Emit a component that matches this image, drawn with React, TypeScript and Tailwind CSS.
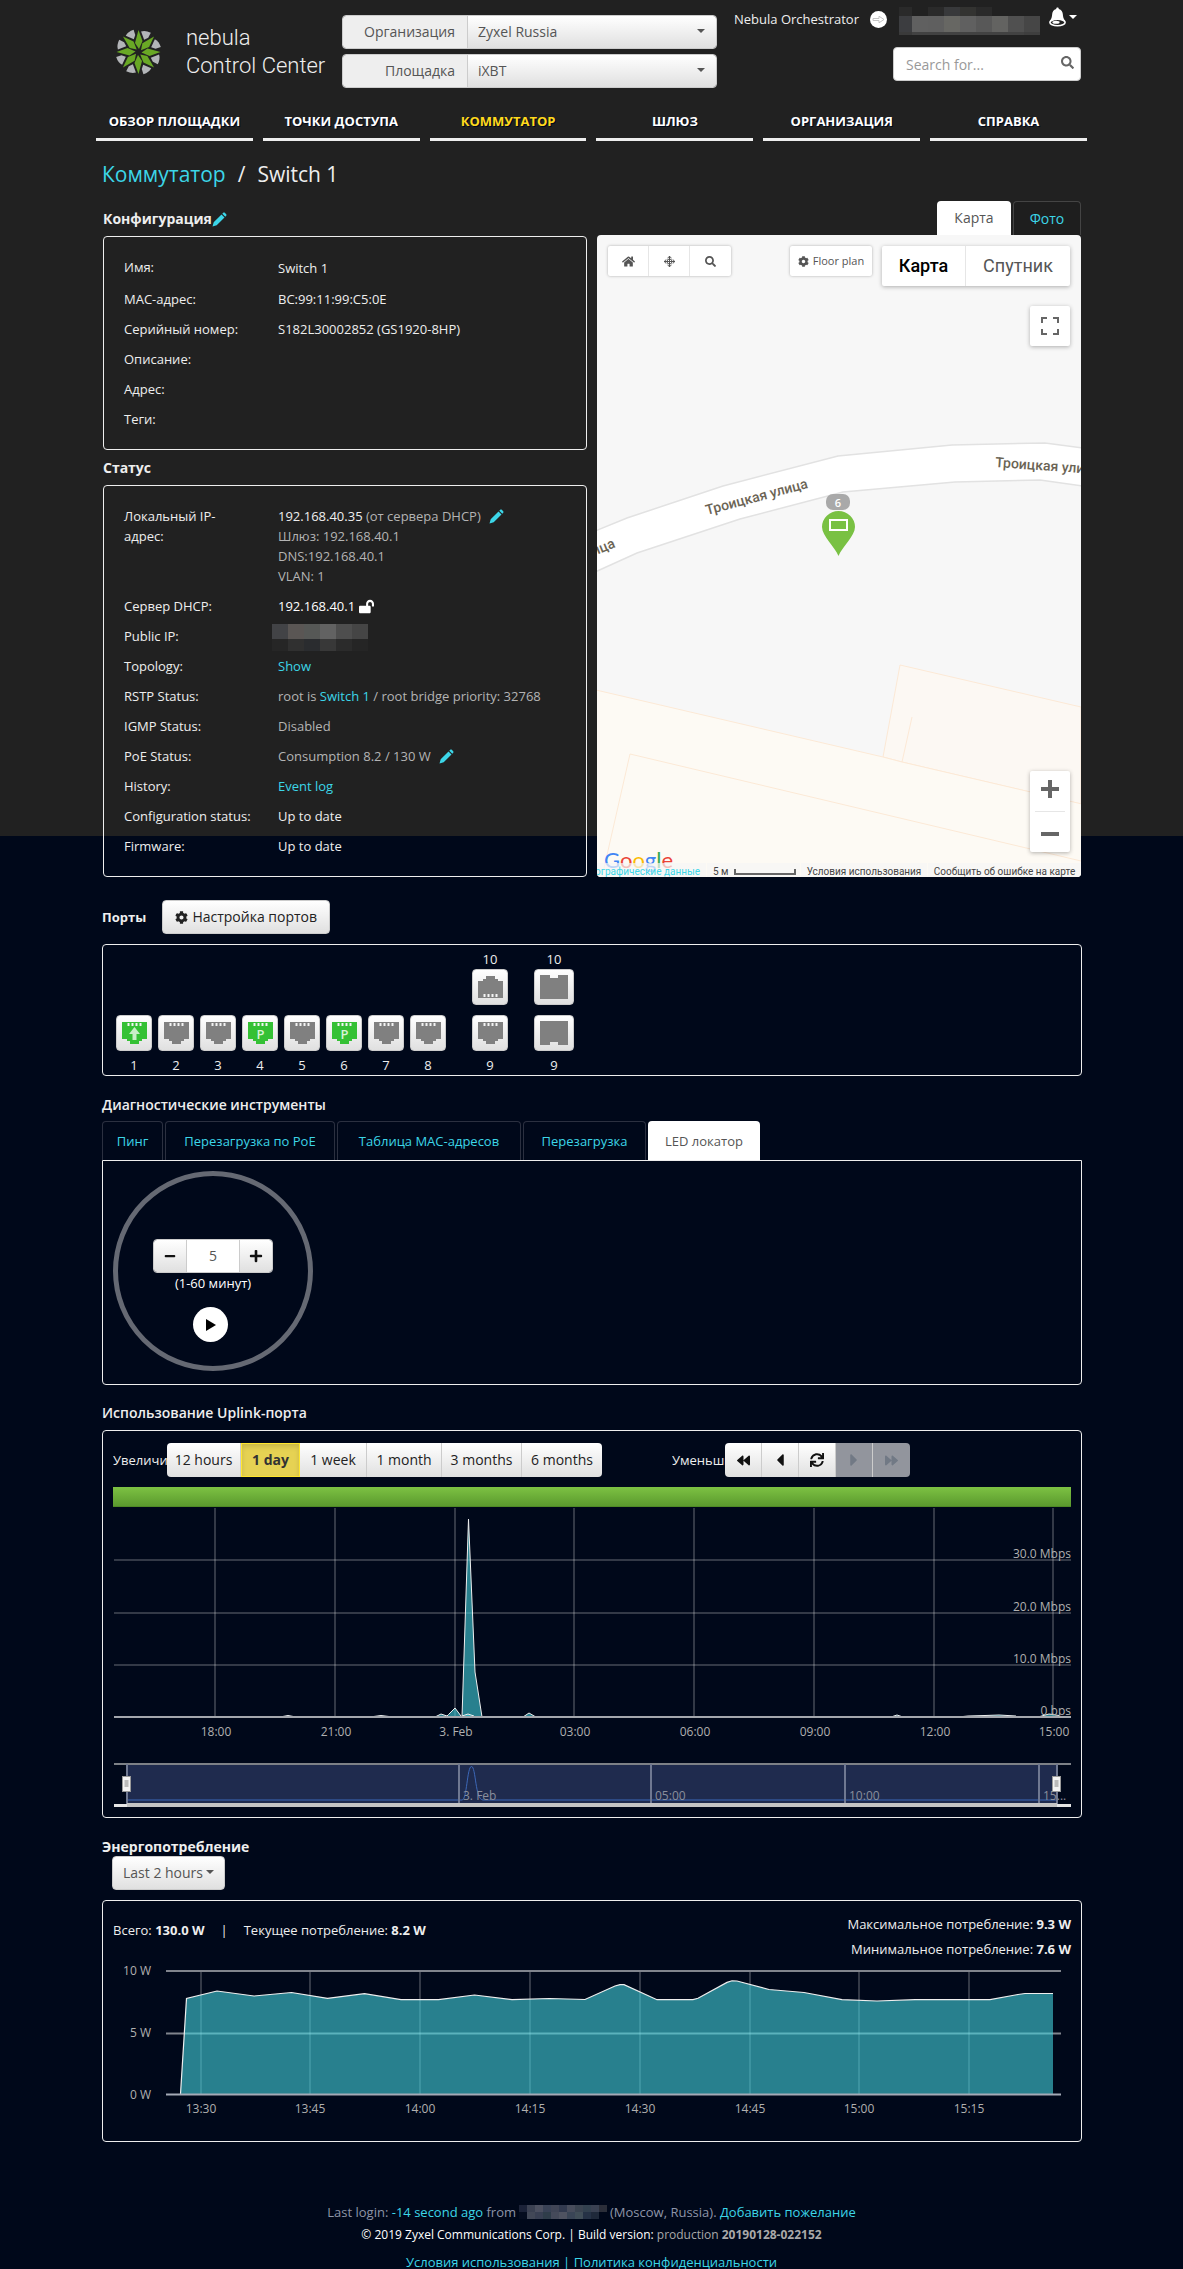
import type { ReactNode } from 'react'
import { FaBackward, FaCaretLeft, FaCaretRight, FaCog, FaForward, FaHome, FaLockOpen, FaMinus, FaPlus, FaSearch, FaSync } from 'react-icons/fa'

const NAV = ['ОБЗОР ПЛОЩАДКИ', 'ТОЧКИ ДОСТУПА', 'КОММУТАТОР', 'ШЛЮЗ', 'ОРГАНИЗАЦИЯ', 'СПРАВКА']

const CONFIG = [
  { label: 'MAC-адрес:', value: 'BC:99:11:99:C5:0E' },
  { label: 'Серийный номер:', value: 'S182L30002852 (GS1920-8HP)' },
  { label: 'Описание:', value: '' },
  { label: 'Адрес:', value: '' },
  { label: 'Теги:', value: '' },
]

const PORTS: { id: number; state: 'uplink' | 'poe' | 'down' }[] = [
  { id: 1, state: 'uplink' },
  { id: 2, state: 'down' },
  { id: 3, state: 'down' },
  { id: 4, state: 'poe' },
  { id: 5, state: 'down' },
  { id: 6, state: 'poe' },
  { id: 7, state: 'down' },
  { id: 8, state: 'down' },
]

const TOOLS = [
  { name: 'Пинг', width: 'w-[61px]' },
  { name: 'Перезагрузка по PoE', width: 'w-[170px]' },
  { name: 'Таблица MAC-адресов', width: 'w-[184px]' },
  { name: 'Перезагрузка', width: 'w-[123px]' },
]

const RANGES = [
  { name: '12 hours', width: 'w-[74px]' },
  { name: '1 day', width: 'w-[59px]' },
  { name: '1 week', width: 'w-[67px]' },
  { name: '1 month', width: 'w-[75px]' },
  { name: '3 months', width: 'w-[80px]' },
  { name: '6 months', width: 'w-[80px]' },
]

const UPLINK_HOURS = ['18:00', '21:00', '3. Feb', '03:00', '06:00', '09:00', '12:00', '15:00']
const UPLINK_X = [102, 222, 342, 461, 581, 701, 821, 940]
const POWER_HOURS = ['13:30', '13:45', '14:00', '14:15', '14:30', '14:45', '15:00', '15:15']
const POWER_X = [88, 197, 307, 417, 527, 637, 746, 856]

const POWER_LINE =
  '67.5,144 73.5,48.5 104,41 141,46 178.5,42.5 214.5,48.3 251.5,43.7 288,49.7 325.5,49.7 361.5,45 399,49.7 436.5,48.5 472,49.5 502,36 507,34.6 511,34.6 544,49.7 580,49.7 585,48.3 614,32.4 619,30.8 624,31 656,39.5 691,42.5 729,49.7 764,51 802,49.7 845,49.7 877,49.7 905,44.5 912,43.5 940,43.5'

export default function App() {
  return (
    <div className="bg-[linear-gradient(#212121_836px,#00081a_836px)] font-['Open_Sans',sans-serif] text-[13px] leading-5 text-[#eeeeee]">
      <div className="mx-auto w-full max-w-[991px]">
        <Header />
        <nav className="mt-[18px] grid grid-cols-6 gap-[10px]">
          {NAV.map((item) => (
            <a
              key={item}
              href="#"
              className={
                item === 'КОММУТАТОР'
                  ? 'flex h-[35px] justify-center border-b-3 border-[#eeeeee] pt-[5px] font-bold text-[#ffd91c] [text-shadow:1px_1px_0_#00081a]'
                  : 'flex h-[35px] justify-center border-b-3 border-[#eeeeee] pt-[5px] font-bold text-white [text-shadow:1px_1px_0_#00081a]'
              }
            >
              {item}
            </a>
          ))}
        </nav>

        <main className="pr-[5px] pl-[6px]">
          <h1 className="mt-[18px] flex h-[30px] items-center gap-3 text-[21px]">
            <a href="#" className="text-[#3cd6e8]">Коммутатор</a>
            <span>/</span>
            <span>Switch 1</span>
          </h1>

          <div className="mt-3 grid grid-cols-2 gap-[10px] px-px">
            <div className="flex flex-col pt-2">
              <Config />
              <Status />
            </div>
            <MapPanel />
          </div>

          <Ports />
          <Diagnostics />
          <Uplink />
          <Power />
        </main>

        <Footer />
      </div>
    </div>
  )
}

function Header() {
  return (
    <header className="flex items-start">
      <div className="flex w-[246px] items-center gap-[25px] pt-[24px] pl-5">
        <Logo />
        <p className="font-['Roboto',sans-serif] text-[22px] leading-7 font-light">
          nebula
          <br />
          Control Center
        </p>
      </div>

      <div className="flex w-[375px] flex-col gap-[5px] pt-[15px]">
        <SelectGroup id="org" label="Организация" value="Zyxel Russia" />
        <SelectGroup id="site" label="Площадка" value="iXBT" />
      </div>

      <div className="flex flex-1 flex-col items-end pt-[7px] pr-[6px]">
        <div className="flex h-7 items-center pr-1">
          <span className="mr-[11px] mb-1">Nebula Orchestrator</span>
          <button type="button" aria-label="Switch view" className="mr-3 mb-1 flex size-[17px] items-center justify-center rounded-full bg-white">
            <svg width="13" height="9" viewBox="0 0 13 9" fill="none" stroke="#c4c4c4" strokeWidth="1">
              <path d="M1 3.5h6V1.2L12 4.5 7 7.8V5.5H1z" />
            </svg>
          </button>
          <div className="grid h-7 w-[142px] grid-cols-[13px_16px_16px_16px_16px_16px_16px_16px_16px] grid-rows-[9px_16px_3px]">
            {[
              'bg-[#2a2a2a]', 'bg-[#212121]', 'bg-[#2a2a2a]', 'bg-[#38393b]', 'bg-[#333331]', 'bg-[#2a2a2a]', 'bg-[#212121]', 'bg-[#212121]', 'bg-[#212121]',
              'bg-[#3c3d40]', 'bg-[#606060]', 'bg-[#5f5f5f]', 'bg-[#676763]', 'bg-[#606060]', 'bg-[#585858]', 'bg-[#636361]', 'bg-[#505050]', 'bg-[#464646]',
              'bg-[#3a3a3a]', 'bg-[#424242]', 'bg-[#424242]', 'bg-[#424242]', 'bg-[#424242]', 'bg-[#424242]', 'bg-[#424242]', 'bg-[#424242]', 'bg-[#3e3e3e]',
            ].map((c, i) => (
              <span key={i} className={c} />
            ))}
          </div>
          <button type="button" aria-label="Notifications" className="ml-[7px] flex items-center gap-[2px] pb-2">
            <svg width="19" height="20" viewBox="0 0 19 20">
              <path d="M9.500 0.500c1 0 1.300.7 1.300 1.400 2.800.8 3.800 2.700 4 5.100.2 3 .7 5 2.600 7.200C18 15 14 17 9.500 17S1 15 1.600 14.200C3.500 12 4 10 4.200 7c.2-2.400 1.200-4.300 4-5.100 0-.7.3-1.400 1.300-1.400z" fill="#fff" />
              <ellipse cx="9.5" cy="15.5" rx="7.6" ry="3.2" fill="#212121" stroke="#fff" strokeWidth="1.6" />
              <ellipse cx="8" cy="15.3" rx="3.6" ry="1.5" fill="#fff" />
            </svg>
            <Caret className="text-white" />
          </button>
        </div>
        <div className="relative mt-3 w-[188px]">
          <input
            type="search"
            aria-label="Search"
            placeholder="Search for..."
            className="h-[34px] w-full rounded border border-[#cccccc] bg-white pr-8 pl-3 text-sm text-[#555555] placeholder:text-[#999999]"
          />
          <FaSearch className="absolute top-[9px] right-[7px] size-[13px] text-[#666666]" />
        </div>
      </div>
    </header>
  )
}

function SelectGroup({ id, label, value }: { id: string; label: string; value: string }) {
  return (
    <div className="flex h-[34px] overflow-hidden rounded border border-[#cccccc] text-sm text-[#555555]">
      <label htmlFor={id} className="flex w-[125px] items-center justify-end border-r border-[#cccccc] bg-[#eeeeee] pr-3">
        {label}
      </label>
      <div className="relative flex-1">
        <select id={id} className="h-full w-full appearance-none bg-linear-to-b from-white to-[#e0e0e0] pl-[10px]">
          <option>{value}</option>
        </select>
        <Caret className="pointer-events-none absolute top-[13px] right-[11px] text-[#555555]" />
      </div>
    </div>
  )
}

function Config() {
  return (
    <>
      <h2 className="mb-[7px] flex items-center text-sm leading-5 font-bold">
        Конфигурация
        <EditLink />
      </h2>
      <dl className="flex flex-col gap-[10px] rounded border border-[#eeeeee] px-5 py-5">
        <div className="flex h-[22px]">
          <dt className="w-[154px]">Имя:</dt>
          <dd className="pt-px">Switch 1</dd>
        </div>
        {CONFIG.map((row) => (
          <div key={row.label} className="flex">
            <dt className="w-[154px]">{row.label}</dt>
            <dd>{row.value}</dd>
          </div>
        ))}
      </dl>
    </>
  )
}

function Status() {
  return (
    <>
      <h2 className="mt-2 mb-[7px] text-sm leading-5 font-bold">Статус</h2>
      <dl className="flex flex-col gap-[10px] rounded border border-[#eeeeee] px-5 py-5">
        <Row label={<>Локальный IP-<br />адрес:</>}>
          <span className="flex items-center">
            <span className="text-[#eeeeee]">192.168.40.35</span>&nbsp;(от сервера DHCP)
            <span className="ml-2"><EditLink /></span>
          </span>
          Шлюз: 192.168.40.1
          <br />
          DNS:192.168.40.1
          <br />
          VLAN: 1
        </Row>
        <Row label="Сервер DHCP:">
          <span className="flex items-center gap-1 text-white">
            192.168.40.1 <FaLockOpen className="size-[15px]" />
          </span>
        </Row>
        <Row label="Public IP:">
          <div className="-mt-[2px] -mb-[5px] -ml-[6px] grid grid-cols-[repeat(6,16px)] grid-rows-[15px_12px]">
            {[
              'bg-[#424346]', 'bg-[#5a5654]', 'bg-[#565856]', 'bg-[#626262]', 'bg-[#4e4e4e]', 'bg-[#454545]',
              'bg-[#262626]', 'bg-[#303030]', 'bg-[#2a2c2f]', 'bg-[#383838]', 'bg-[#2b2b2b]', 'bg-[#252525]',
            ].map((c, i) => (
              <span key={i} className={c} />
            ))}
          </div>
        </Row>
        <Row label="Topology:">
          <a href="#" className="text-[#3cd6e8]">Show</a>
        </Row>
        <Row label="RSTP Status:">
          root is <a href="#" className="text-[#3cd6e8]">Switch 1</a> / root bridge priority: 32768
        </Row>
        <Row label="IGMP Status:">Disabled</Row>
        <Row label="PoE Status:">
          <span className="flex items-center gap-2">
            Consumption 8.2 / 130 W <EditLink />
          </span>
        </Row>
        <Row label="History:">
          <a href="#" className="text-[#3cd6e8]">Event log</a>
        </Row>
        <Row label="Configuration status:">
          <span className="text-[#eeeeee]">Up to date</span>
        </Row>
        <Row label="Firmware:">
          <span className="text-[#eeeeee]">Up to date</span>
        </Row>
      </dl>
    </>
  )
}

function Row({ label, children }: { label: ReactNode; children: ReactNode }) {
  return (
    <div className="flex">
      <dt className="w-[154px]">{label}</dt>
      <dd className="text-[#b4b4b4]">{children}</dd>
    </div>
  )
}

function EditLink() {
  return (
    <a href="#" aria-label="Edit">
      <svg width="15" height="15" viewBox="0 0 15 15" fill="#3cd6e8">
        <path d="M0.500 14.500l1.200-4.200L9.500 2.500l3 3-7.800 7.800zM10.300 1.700l.9-.9c.5-.5 1.100-.5 1.600 0l1.400 1.400c.5.5.5 1.100 0 1.600l-.9.900z" />
      </svg>
    </a>
  )
}

function MapPanel() {
  return (
    <div className="flex flex-col">
      <div className="flex h-[34px] justify-end gap-[2px]">
        <button type="button" className="w-[74px] rounded-t bg-white text-sm text-[#555555]">Карта</button>
        <button type="button" className="w-[68px] rounded-t border border-b-0 border-[#444444] bg-[#1e1e1e] text-sm text-[#3cd6e8]">Фото</button>
      </div>
      <div className="relative flex-1 overflow-hidden rounded bg-[#f7f7f7] text-[#555555]">
        <svg className="absolute inset-0 h-full w-full" viewBox="0 0 484 642" preserveAspectRatio="xMidYMid slice">
          <g stroke="#fce9d6" strokeWidth="1">
            <path d="M303 430L484 472V569L305 527L286 522z" fill="#fcf8f3" />
            <path d="M-1 455L286 522L305 527L485 569V643H-1z" fill="#fdfaf4" />
            <path d="M315 482L305 527M33 519L484 626M33 519L5 642" fill="none" />
          </g>
          <path
            d="M-2 296L30 283L126 251L241 221L355 210L448 208L486 213V251L443 245L358 247L246 257L143 284L40 318L-2 337z"
            fill="#fff"
            stroke="#e2e2e2"
            strokeWidth="1.5"
          />
          <g fontFamily="Roboto, sans-serif" fontSize="14" fontWeight="500" fill="#6b6455">
            <text transform="translate(110 280) rotate(-15)">Троицкая улица</text>
            <text transform="translate(398 232) rotate(4)">Троицкая улица</text>
            <text transform="translate(19 312) rotate(-22)" textAnchor="end">Троицкая улица</text>
          </g>
          <rect x="229" y="259" width="24" height="16" rx="7" fill="#a9a9a9" />
          <text x="241" y="272" textAnchor="middle" fontSize="11" fontWeight="600" fill="#fff">6</text>
          <path d="M241.500 321C238 312 225 301 225 292a16.500 16 0 0 1 33 0C258 301 245 312 241.500 321z" fill="#79c143" />
          <rect x="233" y="285" width="17" height="10" fill="none" stroke="#fff" strokeWidth="2" />
          <text x="7" y="633" fontFamily="Lato, sans-serif" fontSize="22">
            <tspan fill="#4285f4">G</tspan>
            <tspan fill="#ea4335">o</tspan>
            <tspan fill="#fbbc05">o</tspan>
            <tspan fill="#4285f4">g</tspan>
            <tspan fill="#34a853">l</tspan>
            <tspan fill="#ea4335">e</tspan>
          </text>
        </svg>

        <div className="absolute top-[11px] left-[11px] flex h-[30px] divide-x divide-[#e6e6e6] rounded-xs bg-white shadow-[0_0_3px_rgba(0,0,0,0.3)]">
          <MapTool label="Home"><FaHome className="size-[13px]" /></MapTool>
          <MapTool label="Center">
            <svg width="11" height="11" viewBox="0 0 11 11" fill="none" stroke="#555" strokeWidth="1">
              <circle cx="5.5" cy="5.5" r="2.5" />
              <path d="M5.500 0v11M0 5.500h11M3.500 2l2-1.500 2 1.500M3.500 9l2 1.500 2-1.500M2 3.500L.5 5.500 2 7.500M9 3.500l1.500 2L9 7.500" />
            </svg>
          </MapTool>
          <MapTool label="Search"><FaSearch className="size-[11px]" /></MapTool>
        </div>

        <div className="absolute top-[11px] right-[11px] flex items-start gap-[10px]">
          <button type="button" className="flex h-[30px] w-[82px] items-center justify-center gap-1 rounded-xs bg-white text-[11px] shadow-[0_0_3px_rgba(0,0,0,0.3)]">
            <FaCog className="size-[11px]" /> Floor plan
          </button>
          <div className="flex h-10 divide-x divide-[#e6e6e6] rounded-xs bg-white font-['Roboto',sans-serif] text-[18px] shadow-[0_1px_4px_rgba(0,0,0,0.3)]">
            <button type="button" className="w-[84px] font-medium text-black">Карта</button>
            <button type="button" className="w-[104px] text-[#565656]">Спутник</button>
          </div>
        </div>

        <button type="button" aria-label="Fullscreen" className="absolute top-[71px] right-[11px] flex size-10 items-center justify-center rounded-xs bg-white shadow-[0_1px_4px_rgba(0,0,0,0.3)]">
          <svg width="18" height="18" viewBox="0 0 18 18" fill="none" stroke="#666" strokeWidth="2">
            <path d="M1 6V1h5M12 1h5v5M17 12v5h-5M6 17H1v-5" />
          </svg>
        </button>

        <div className="absolute right-[11px] bottom-[25px] flex w-10 flex-col rounded-xs bg-white px-[5px] text-[#666666] shadow-[0_1px_4px_rgba(0,0,0,0.3)]">
          <button type="button" aria-label="Zoom in" className="flex h-[41px] items-center justify-center border-b border-[#e6e6e6] pb-1">
            <svg width="18" height="18" viewBox="0 0 18 18" fill="currentColor"><path d="M7 0h4v7h7v4h-7v7H7v-7H0V7h7z" /></svg>
          </button>
          <button type="button" aria-label="Zoom out" className="flex h-[40px] items-center justify-center pt-1">
            <svg width="18" height="4" viewBox="0 0 18 4" fill="currentColor"><path d="M0 0h18v4H0z" /></svg>
          </button>
        </div>

        <div className="absolute inset-x-0 bottom-0 flex h-[14px] justify-end gap-px font-['Roboto',sans-serif] text-[10px] leading-[18px] whitespace-nowrap text-[#444444]">
          <span className="flex w-[109px] justify-end overflow-hidden bg-[#f5f5f5]/70 pr-[6px]">
            <a href="#" className="text-[#3cd6e8]">Картографические данные</a>
          </span>
          <span className="flex w-[93px] gap-[5px] bg-[#f5f5f5]/70 pl-[6px]">
            5 м
            <span className="mt-[6px] h-[6px] w-[62px] border-2 border-t-0 border-[#666666]" />
          </span>
          <a href="#" className="w-[126px] bg-[#f5f5f5]/70 text-center">Условия использования</a>
          <a href="#" className="w-[153px] bg-[#f5f5f5]/70 text-center">Сообщить об ошибке на карте</a>
        </div>
      </div>
    </div>
  )
}

function MapTool({ label, children }: { label: string; children: ReactNode }) {
  return (
    <button type="button" aria-label={label} className="flex w-[41px] items-center justify-center">
      {children}
    </button>
  )
}

function Ports() {
  return (
    <section>
      <div className="mt-[23px] flex items-center gap-4">
        <h2 className="text-[13px] font-bold">Порты</h2>
        <button type="button" className="flex h-[34px] w-[168px] items-center justify-center gap-1 rounded border border-[#cccccc] bg-linear-to-b from-white to-[#e0e0e0] text-sm text-[#222222]">
          <FaCog className="size-[13px]" /> Настройка портов
        </button>
      </div>
      <div className="mt-[10px] flex items-end rounded border border-[#eeeeee] pt-1 pl-[13px] text-center">
        <div className="flex gap-[6px]">
          {PORTS.map((port) => (
            <div key={port.id} className="flex flex-col gap-1">
              <PortButton label={`Port ${port.id}`}>
                <Rj45 state={port.state} />
              </PortButton>
              <span>{port.id}</span>
            </div>
          ))}
        </div>
        <div className="ml-[26px] flex flex-col">
          <span>10</span>
          <PortButton label="Port 10">
            <Rj45 state="down" flipped />
          </PortButton>
          <div className="mt-[10px] mb-1 flex">
            <PortButton label="Port 9">
              <Rj45 state="down" />
            </PortButton>
          </div>
          <span>9</span>
        </div>
        <div className="ml-[26px] flex flex-col">
          <span>10</span>
          <PortButton label="SFP 10" wide>
            <svg width="28" height="24" viewBox="0 0 28 24" fill="#808080"><path d="M0 0h10v3h8V0h10v24H0z" /></svg>
          </PortButton>
          <div className="mt-[10px] mb-1 flex">
            <PortButton label="SFP 9" wide>
              <svg width="28" height="24" viewBox="0 0 28 24" fill="#808080"><path d="M0 0h28v24H18v-3h-8v3H0z" /></svg>
            </PortButton>
          </div>
          <span>9</span>
        </div>
      </div>
    </section>
  )
}

function PortButton({ label, wide, children }: { label: string; wide?: boolean; children: ReactNode }) {
  return (
    <button
      type="button"
      aria-label={label}
      className={
        wide
          ? 'flex h-9 w-10 items-center justify-center rounded border border-[#cccccc] bg-linear-to-b from-white to-[#e0e0e0]'
          : 'flex h-9 w-9 items-center justify-center rounded border border-[#cccccc] bg-linear-to-b from-white to-[#e0e0e0]'
      }
    >
      {children}
    </button>
  )
}

function Rj45({ state, flipped }: { state: 'uplink' | 'poe' | 'down'; flipped?: boolean }) {
  return (
    <svg width="25" height="22" viewBox="0 0 25 22">
      <g transform={flipped ? 'rotate(180 12.5 11)' : undefined}>
        <path d="M0 0h25v17h-5v2h-3v3H8v-3H5v-2H0z" fill={state === 'down' ? '#808080' : '#35c135'} />
        <path d="M5.500 1h2v3h-2zM9.500 1h2v3h-2zM13.500 1h2v3h-2zM17.500 1h2v3h-2z" fill="#f4f4f4" />
      </g>
      {state === 'uplink' && <path d="M12.500 5l5.500 7h-3.500v6h-4v-6H7z" fill="#c8eec8" />}
      {state === 'poe' && <text x="12.5" y="17" textAnchor="middle" fontSize="13" fontWeight="600" fill="#d8f3d8">P</text>}
    </svg>
  )
}

function Diagnostics() {
  return (
    <section>
      <h2 className="mt-[19px] text-sm leading-5 font-semibold">Диагностические инструменты</h2>
      <div className="mt-[6px] flex h-[39px] gap-[2px]">
        {TOOLS.map((tool) => (
          <button key={tool.name} type="button" className={`${tool.width} rounded-t border border-b-0 border-[#2b3040] text-[13px] whitespace-nowrap text-[#3cd6e8]`}>
            {tool.name}
          </button>
        ))}
        <button type="button" className="w-[112px] rounded-t bg-white text-[13px] text-[#555555]">LED локатор</button>
      </div>
      <div className="rounded-b border border-[#eeeeee] p-[10px] pb-[13px]">
        <div className="flex size-[200px] flex-col items-center rounded-full border-[5px] border-[#656973] pt-[63px]">
          <div className="flex h-[34px] w-[120px] overflow-hidden rounded border border-[#cccccc] text-[#111111]">
            <button type="button" aria-label="Minus" className="flex flex-1 items-center justify-center bg-linear-to-b from-white to-[#e0e0e0]">
              <FaMinus className="size-[12px]" />
            </button>
            <input
              type="text"
              aria-label="Минуты"
              defaultValue="5"
              className="w-[54px] border-x border-[#cccccc] bg-white text-center text-sm text-[#555555]"
            />
            <button type="button" aria-label="Plus" className="flex flex-1 items-center justify-center bg-linear-to-b from-white to-[#e0e0e0]">
              <FaPlus className="size-[14px]" />
            </button>
          </div>
          <span className="text-white">(1-60 минут)</span>
          <button type="button" aria-label="Start" className="mt-[14px] mr-[5px] flex size-[35px] items-center justify-center rounded-full bg-white text-black">
            <svg width="10" height="12" viewBox="0 0 10 12" fill="currentColor"><path d="M0 0l10 6-10 6z" /></svg>
          </button>
        </div>
      </div>
    </section>
  )
}

function Uplink() {
  return (
    <section>
      <h2 className="mt-[18px] text-sm leading-5 font-semibold">Использование Uplink-порта</h2>
      <div className="mt-[7px] rounded border border-[#eeeeee] px-[10px] pt-3 pb-[10px]">
        <div className="flex items-center">
          <span className="w-[54px] overflow-hidden">Увеличить</span>
          <div className="flex h-[34px] divide-x divide-[#cccccc] overflow-hidden rounded text-sm text-[#222222]">
            {RANGES.map((range) => (
              <button
                key={range.name}
                type="button"
                className={
                  range.name === '1 day'
                    ? `${range.width} border border-[#ffe62e] bg-[#e6d253] font-bold text-[#333333] shadow-[inset_0_3px_5px_rgba(0,0,0,0.125)]`
                    : `${range.width} bg-linear-to-b from-white to-[#e0e0e0]`
                }
              >
                {range.name}
              </button>
            ))}
          </div>
          <span className="ml-[70px] w-[53px] overflow-hidden">Уменьшить</span>
          <div className="flex h-[34px] divide-x divide-[#cccccc] overflow-hidden rounded text-[#111111]">
            <Step label="First"><FaBackward className="size-[13px]" /></Step>
            <Step label="Previous"><FaCaretLeft className="size-[20px]" /></Step>
            <Step label="Refresh"><FaSync className="size-[14px]" /></Step>
            <Step label="Next" disabled><FaCaretRight className="size-[20px]" /></Step>
            <Step label="Last" disabled><FaForward className="size-[13px]" /></Step>
          </div>
        </div>
        <div className="mt-[10px] h-5 border-b border-[#4f8a26] bg-linear-to-b from-[#7dc243] to-[#5b9a2e]" />
        <UplinkChart />
      </div>
    </section>
  )
}

function Step({ label, disabled, children }: { label: string; disabled?: boolean; children: ReactNode }) {
  return (
    <button
      type="button"
      aria-label={label}
      disabled={disabled}
      className={
        disabled
          ? 'flex w-[37px] items-center justify-center bg-[#92959d] text-[#717985]'
          : 'flex w-[37px] items-center justify-center bg-linear-to-b from-white to-[#e0e0e0]'
      }
    >
      {children}
    </button>
  )
}

function UplinkChart() {
  return (
    <svg className="w-full" viewBox="0 0 958 300" fontSize="12" fill="#b0b0b0">
      {/* grid */}
      <g stroke="#fff" strokeOpacity="0.2" strokeWidth="2">
        {UPLINK_X.map((x) => (
          <path key={x} d={`M${x} 1V210`} />
        ))}
        <path d="M1 53H958M1 106H958M1 158H958" />
      </g>
      {/* traffic */}
      <g fill="#43d0dc" fillOpacity="0.6" stroke="#eeeeee" strokeWidth="1">
        <path d="M349 210L355.500 12L362 165L369 210z" />
        <path d="M322 210L328 207L334 209L335.500 207.500L342 201L348 209M349 209L355 207L361 209M410 210L416 206L422 209.500M167 210L175 208.500L183 210M257 210L268 208.500L280 210" />
        <path d="M778 210L784 208L790 210M845 210L855 209L872 208.500L886 208L903 209M925 210L936 207L946 208.500" />
      </g>
      <path d="M1 210H958" stroke="#a4a7ae" strokeWidth="2" />
      {UPLINK_HOURS.map((hour, i) => (
        <text key={hour} x={UPLINK_X[i] + 1} y="229" textAnchor="middle">{hour}</text>
      ))}
      <g textAnchor="end">
        <text x="958" y="51">30.0 Mbps</text>
        <text x="958" y="104">20.0 Mbps</text>
        <text x="958" y="156">10.0 Mbps</text>
        <text x="958" y="208">0 bps</text>
      </g>
      {/* navigator */}
      <rect x="14" y="257" width="930" height="40" fill="#1f2b4e" />
      <path d="M1 257H958" stroke="#7d8187" strokeWidth="2" />
      <path d="M14 293H349C354 293 354 259.500 358.500 259.500S362 293 370 293H944" fill="none" stroke="#3d68b8" strokeWidth="1" />
      <g stroke="#6f7891" strokeWidth="2">
        <path d="M346 257V297M538 257V297M732 257V297M926 257V297" />
        <path d="M14 257V297M944 257V297" />
      </g>
      <g fill="#8a8f9c">
        <text x="350" y="293">3. Feb</text>
        <text x="542" y="293">05:00</text>
        <text x="736" y="293">10:00</text>
        <text x="930" y="293">15...</text>
      </g>
      <rect x="1" y="297" width="957" height="3" fill="#e6e6e6" />
      <rect x="14" y="296" width="930" height="4" fill="#c4c4c4" />
      <g fill="#f2f2f2" stroke="#999" strokeWidth="1">
        <rect x="9.5" y="269.5" width="8" height="15" />
        <rect x="939.5" y="269.5" width="8" height="15" />
      </g>
      <g fill="#bbb">
        <rect x="11.5" y="273" width="4" height="7" />
        <rect x="941.5" y="273" width="4" height="7" />
      </g>
    </svg>
  )
}

function Power() {
  return (
    <section>
      <h2 className="mt-[19px] text-sm leading-5 font-bold">
        <label htmlFor="period">Энергопотребление</label>
      </h2>
      <div className="relative -mt-px ml-[10px] w-[113px]">
        <select id="period" className="block h-[34px] w-full appearance-none rounded border border-[#cccccc] bg-linear-to-b from-white to-[#e0e0e0] pl-[10px] text-sm text-[#555555]">
          <option>Last 2 hours</option>
        </select>
        <Caret className="pointer-events-none absolute top-[14px] right-[11px] text-[#555555]" />
      </div>
      <div className="mt-[10px] rounded border border-[#eeeeee] px-[10px] pt-[11px] pb-[7px]">
        <div className="flex justify-between">
          <p className="pt-2">
            Всего: <b>130.0 W</b>
            <span className="mx-4">|</span>
            Текущее потребление: <b>8.2 W</b>
          </p>
          <p className="text-right leading-[25px]">
            Максимальное потребление: <b>9.3 W</b>
            <br />
            Минимальное потребление: <b>7.6 W</b>
          </p>
        </div>
        <svg className="-mt-3 w-full" viewBox="0 0 958 184" fontSize="12" fill="#b0b0b0">
          <g stroke="#fff" strokeWidth="2">
            <path d="M53 21H948M53 83.500H948" strokeOpacity="0.5" />
            {POWER_X.map((x) => (
              <path key={x} d={`M${x} 22V144`} strokeOpacity="0.2" />
            ))}
          </g>
          <polygon points={`${POWER_LINE} 940,144`} fill="#43d0dc" fillOpacity="0.6" />
          <polyline points={POWER_LINE} fill="none" stroke="#eeeeee" strokeWidth="1.2" />
          <path d="M53 144.500H948" stroke="#a4aab6" strokeWidth="2" />
          <g textAnchor="end">
            <text x="38" y="25">10 W</text>
            <text x="38" y="87">5 W</text>
            <text x="38" y="149">0 W</text>
          </g>
          {POWER_HOURS.map((hour, i) => (
            <text key={hour} x={POWER_X[i]} y="163" textAnchor="middle">{hour}</text>
          ))}
        </svg>
      </div>
    </section>
  )
}

function Footer() {
  return (
    <footer className="mt-[60px] text-center text-[#8e95a8]">
      <p className="flex items-center justify-center">
        Last login:&nbsp;<a href="#" className="text-[#3cd6e8]">-14 second ago</a>&nbsp;from
        <span className="mx-[3px] grid grid-cols-[repeat(11,8px)] grid-rows-2">
          {[
            'bg-[#1b2238]', 'bg-[#3b4152]', 'bg-[#4c5060]', 'bg-[#394256]', 'bg-[#404556]', 'bg-[#323a4f]', 'bg-[#484d5c]', 'bg-[#3b4451]', 'bg-[#33414f]', 'bg-[#3a4152]', 'bg-[#2b2e39]',
            'bg-[#050d1f]', 'bg-[#424857]', 'bg-[#394053]', 'bg-[#2f3d4a]', 'bg-[#454a5a]', 'bg-[#4f5361]', 'bg-[#3a4556]', 'bg-[#414e58]', 'bg-[#263246]', 'bg-[#1f293a]', 'bg-[#00081a]',
          ].map((c, i) => (
            <span key={i} className={`${c} h-[7px]`} />
          ))}
        </span>
        (Moscow, Russia).&nbsp;<a href="#" className="text-[#3cd6e8]">Добавить пожелание</a>
      </p>
      <p className="mt-[3px] text-xs leading-5 text-white">
        © 2019 Zyxel Communications Corp. | Build version: <span className="text-[#a9a9a9]">production <b>20190128-022152</b></span>
      </p>
      <p className="mt-[10px] leading-[14px] text-[#3cd6e8]">
        <a href="#">Условия использования</a> | <a href="#">Политика конфиденциальности</a>
      </p>
    </footer>
  )
}

function Caret({ className }: { className: string }) {
  return (
    <svg width="8" height="4" viewBox="0 0 8 4" fill="currentColor" className={className}>
      <path d="M0 0h8L4 4z" />
    </svg>
  )
}

function Logo() {
  return (
    <svg width="45" height="46" viewBox="-22.5 -23 45 46">
      {[0, 1, 2, 3, 4, 5, 6, 7].map((i) => (
        <g key={i} transform={`rotate(${i * 45})`}>
          <path d="M0-22L4-11 .5-3-3.500-9z" fill="#69a825" />
          <path d="M-5.500-20Q-2-23 4-22.500L3.500-17 .5-13.500z" fill="#b3b5b8" transform="rotate(22.5)" />
        </g>
      ))}
    </svg>
  )
}
